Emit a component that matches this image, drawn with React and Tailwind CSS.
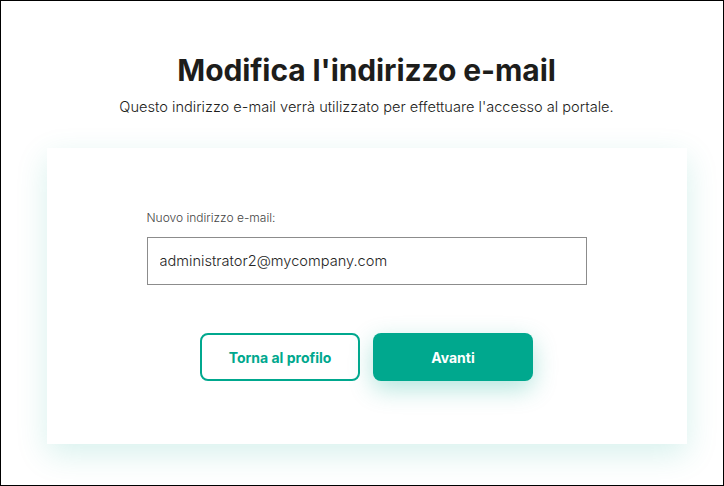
import React, { useState } from "react";

const App = () => {
  const [email, setEmail] = useState("administrator2@mycompany.com");

  return (
    <div
      className="w-[724px] h-[486px] box-border border border-black bg-white flex flex-col items-center pl-[9px] pt-[50px] overflow-hidden"
      style={{ fontFamily: "Inter, 'Noto Sans', sans-serif" }}
    >
      <h1 className="text-[30px] leading-[38px] font-bold text-[#1d1d1b] tracking-[-0.1px]">
        Modifica l'indirizzo e-mail
      </h1>
      <p className="mt-[8px] text-[14.6px] leading-[20px] font-light text-[#1d1d1b]">
        Questo indirizzo e-mail verrà utilizzato per effettuare l'accesso al portale.
      </p>

      <div className="mt-[31px] w-[640px] bg-white shadow-[0_10px_30px_rgba(0,168,142,0.16)] pt-[62px] pb-[63px] flex flex-col items-center">
        <div className="w-[440px] flex flex-col">
          <label className="text-[12px] leading-[16px] font-light text-[#444444]">
            Nuovo indirizzo e-mail:
          </label>
          <input
            value={email}
            onChange={(e) => setEmail(e.target.value)}
            className="mt-[11px] h-[48px] w-full border border-[#8c8c8c] px-[12px] text-[14.6px] font-light text-[#262626] outline-none bg-white"
          />
        </div>

        <div className="mt-[48px] flex gap-[13px]">
          <button className="w-[160px] h-[48px] rounded-[8px] border-2 border-[#00a88e] bg-white text-[14px] font-bold text-[#00a88e]">
            Torna al profilo
          </button>
          <button className="w-[160px] h-[48px] rounded-[8px] bg-[#00a88e] text-[14px] font-bold text-white shadow-[0_8px_24px_rgba(0,168,142,0.3)]">
            Avanti
          </button>
        </div>
      </div>
    </div>
  );
};

export default App;
